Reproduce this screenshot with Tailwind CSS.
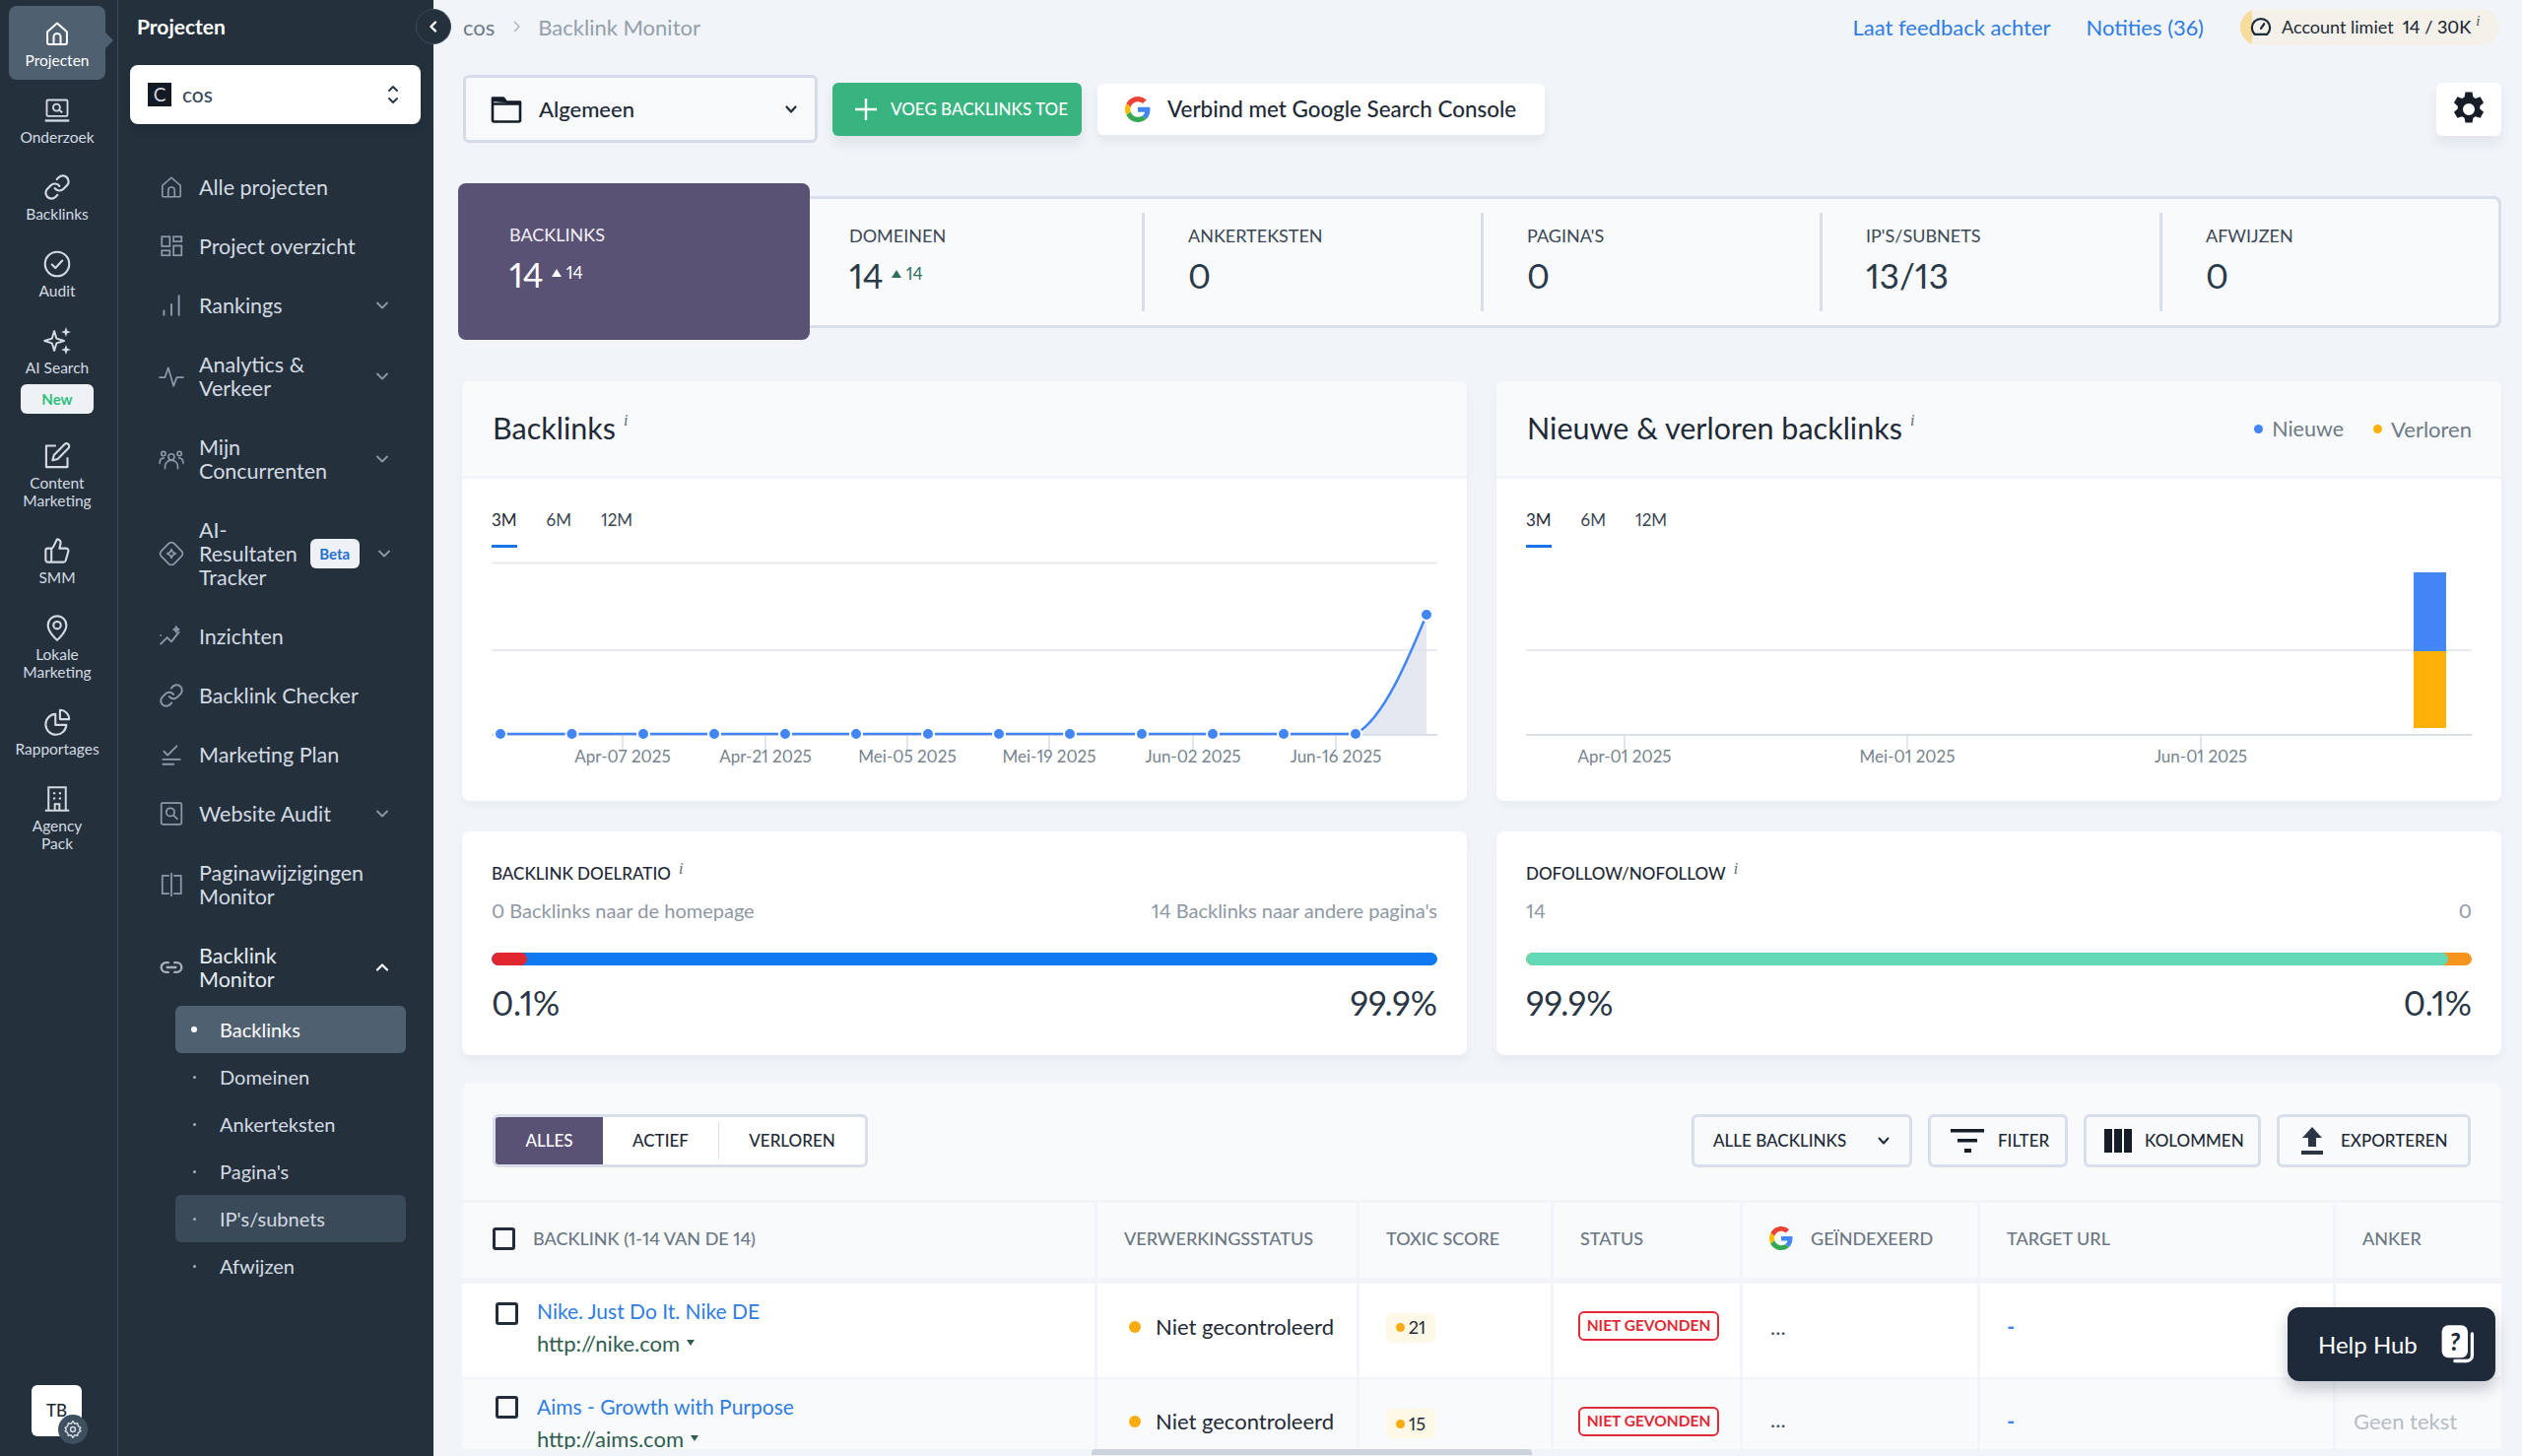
<!DOCTYPE html>
<html lang="nl">
<head>
<meta charset="UTF-8">
<script src="https://cdn.jsdelivr.net/npm/@tailwindcss/browser@4"></script>
<title>Backlink Monitor</title>
</head>
<body class="h-[1478px] w-[2560px] overflow-hidden bg-[#f1f4f8] font-[Lato,sans-serif] text-[#1f2a37] proportional-nums">
<div class="flex h-full">

  <!-- icon rail -->
  <aside class="flex h-full w-[120px] shrink-0 flex-col border-r border-[#3c4a58] bg-[#24313d] pr-[12px] pl-[9px] pt-[6px] text-[15.5px] leading-[18px] text-[#d3dae2]">
    <a class="relative mb-[3px] flex h-[75px] flex-col items-center rounded-lg bg-[#4f6071] pt-[14px] text-white">
      <svg class="h-[28px] w-[28px]" viewBox="0 0 24 24" fill="none" stroke="currentColor" stroke-width="1.7" stroke-linejoin="round"><path d="M3.500 10.500 12 3l8.500 7.500V20a1.500 1.500 0 0 1-1.500 1.500H5A1.500 1.500 0 0 1 3.500 20z"/><path d="M9 21.500V15a3 3 0 0 1 6 0v6.500"/></svg>
      <span class="mt-[4px]">Projecten</span>
      <span class="absolute top-[27px] right-[-8px] h-0 w-0 border-y-[8px] border-l-[8px] border-y-transparent border-l-[#4f6071]"></span>
    </a>
    <a class="mb-[3px] flex h-[75px] flex-col items-center pt-[14px]">
      <svg class="h-[28px] w-[28px]" viewBox="0 0 24 24" fill="none" stroke="currentColor" stroke-width="1.6"><rect x="3" y="3" width="18" height="14" rx="1"/><path d="M1.500 21h21" stroke-width="2"/><circle cx="11.500" cy="9.500" r="3"/><path d="m14 12 2.500 2"/></svg>
      <span class="mt-[4px]">Onderzoek</span>
    </a>
    <a class="mb-[3px] flex h-[75px] flex-col items-center pt-[14px]">
      <svg class="h-[28px] w-[28px]" viewBox="0 0 24 24" fill="none" stroke="currentColor" stroke-width="1.9" stroke-linecap="round"><path d="M10 13a5 5 0 0 0 7.540.540l3-3a5 5 0 0 0-7.070-7.070l-1.720 1.710"/><path d="M14 11a5 5 0 0 0-7.540-.540l-3 3a5 5 0 0 0 7.070 7.070l1.710-1.710"/></svg>
      <span class="mt-[4px]">Backlinks</span>
    </a>
    <a class="mb-[3px] flex h-[75px] flex-col items-center pt-[14px]">
      <svg class="h-[28px] w-[28px]" viewBox="0 0 24 24" fill="none" stroke="currentColor" stroke-width="1.800" stroke-linecap="round" stroke-linejoin="round"><circle cx="12" cy="12" r="10.500"/><path d="m7.500 12.500 3 3 6-6.500"/></svg>
      <span class="mt-[4px]">Audit</span>
    </a>
    <a class="mb-[3px] flex h-[114px] flex-col items-center pt-[14px]">
      <svg class="h-[28px] w-[28px]" viewBox="0 0 24 24" fill="none" stroke="currentColor" stroke-width="1.700" stroke-linejoin="round"><path d="M9.500 3.500 11.500 10l6.500 2-6.500 2-2 6.500-2-6.500L1 12l6.500-2z"/><path d="m19.700 0 1.100 3.200L24 4.300l-3.200 1.100-1.100 3.200-1.100-3.200-3.200-1.100 3.200-1.100zM19.700 15.400l1.100 3.200 3.200 1.100-3.200 1.100-1.100 3.200-1.100-3.200-3.200-1.100 3.200-1.100z" fill="currentColor" stroke="none"/></svg>
      <span class="mt-[4px]">AI Search</span>
      <span class="mt-[8px] flex h-[30px] w-[74px] items-center justify-center rounded-md bg-[#eef2f5] text-[15px] font-bold text-[#2fbf80]">New</span>
    </a>
    <a class="mb-[3px] flex h-[93px] flex-col items-center pt-[14px] text-center">
      <svg class="h-[28px] w-[28px]" viewBox="0 0 24 24" fill="none" stroke="currentColor" stroke-width="1.800" stroke-linejoin="round"><path d="M11 3H2.500v18.500H21V13"/><path d="M18.500 1.800a2.200 2.200 0 0 1 3.300 3.300L12.500 14.500l-4.500 1.200 1.200-4.500z"/></svg>
      <span class="mt-[4px]">Content<br>Marketing</span>
    </a>
    <a class="mb-[3px] flex h-[75px] flex-col items-center pt-[14px]">
      <svg class="h-[28px] w-[28px]" viewBox="0 0 24 24" fill="none" stroke="currentColor" stroke-width="1.800" stroke-linejoin="round"><path d="M7 10v12"/><path d="M15 5.880 14 10h5.830a2 2 0 0 1 1.920 2.560l-2.330 8A2 2 0 0 1 17.500 22H4a2 2 0 0 1-2-2v-8a2 2 0 0 1 2-2h2.760a2 2 0 0 0 1.790-1.110L12 2a3.130 3.130 0 0 1 3 3.880Z"/></svg>
      <span class="mt-[4px]">SMM</span>
    </a>
    <a class="mb-[3px] flex h-[93px] flex-col items-center pt-[14px] text-center">
      <svg class="h-[28px] w-[28px]" viewBox="0 0 24 24" fill="none" stroke="currentColor" stroke-width="1.800"><path d="M20 10c0 6-8 13-8 13s-8-7-8-13a8 8 0 0 1 16 0Z"/><circle cx="12" cy="10" r="3.200"/></svg>
      <span class="mt-[4px]">Lokale<br>Marketing</span>
    </a>
    <a class="mb-[3px] flex h-[75px] flex-col items-center pt-[14px]">
      <svg class="h-[28px] w-[28px]" viewBox="0 0 24 24" fill="none" stroke="currentColor" stroke-width="1.800" stroke-linejoin="round"><path d="M10.500 5A9 9 0 1 0 20 14.500h-9.500z"/><path d="M14.500 1.500a8 8 0 0 1 8 8h-8z"/></svg>
      <span class="mt-[4px]">Rapportages</span>
    </a>
    <a class="flex h-[93px] flex-col items-center pt-[14px] text-center">
      <svg class="h-[28px] w-[28px]" viewBox="0 0 24 24" fill="none" stroke="currentColor" stroke-width="1.700"><path d="M4.500 22V2h15v20M1.500 22h21"/><path d="M8.500 7h2M13.500 7h2M8.500 11.500h2M13.500 11.500h2"/><path d="M10 22v-5.500h4V22"/></svg>
      <span class="mt-[4px]">Agency<br>Pack</span>
    </a>
    <div class="relative mt-auto mb-[20px] ml-[23px] flex h-[52px] w-[51px] items-center justify-center rounded-md bg-white text-[17px] font-medium text-[#1f2a37]">
      TB
      <span class="absolute right-[-6px] bottom-[-8px] flex h-[30px] w-[30px] items-center justify-center rounded-full bg-[#3e4f5f] text-[#d3dae2]">
        <svg class="h-[20px] w-[20px]" viewBox="0 0 24 24" fill="none" stroke="currentColor" stroke-width="1.800" stroke-linejoin="round"><circle cx="12" cy="12" r="3"/><path d="m12 2 2 3 3.500-.5 1 3.500 3 2-1.500 2 1.500 2-3 2-1 3.500-3.500-.5-2 3-2-3-3.500.5-1-3.500-3-2 1.500-2L2.500 10l3-2 1-3.500L10 5z"/></svg>
      </span>
    </div>
  </aside>

  <!-- project sidebar -->
  <aside class="h-full w-[320px] shrink-0 bg-[#24313d] text-[21.5px] leading-[24px] text-[#d3dae2]">
    <div class="flex h-[54px] items-center pl-[19px] text-[21px] font-bold text-white">Projecten</div>
    <div class="mt-[12px] ml-[12px] flex h-[60px] w-[295px] items-center rounded-lg bg-white pl-[18px] shadow-[0_6px_10px_rgba(0,0,0,0.12)]">
      <span class="flex h-[24px] w-[24px] items-center justify-center bg-[#131a24] text-[19px] text-[#d3dae2]">C</span>
      <span class="ml-[11px] text-[21px] font-medium text-[#3b4a5e]">cos</span>
      <svg class="ml-auto mr-[21px] h-[22px] w-[14px]" viewBox="0 0 14 22" fill="none" stroke="#2b3847" stroke-width="2" stroke-linecap="round" stroke-linejoin="round"><path d="m3 7 4-4 4 4M3 15l4 4 4-4"/></svg>
    </div>

    <nav class="mt-[34px] flex flex-col">
      <a class="flex h-[60px] items-center pl-[41px]">
        <svg class="h-[26px] w-[26px] shrink-0 text-[#8d99a6]" viewBox="0 0 24 24" fill="none" stroke="currentColor" stroke-width="1.500" stroke-linejoin="round"><path d="M3.500 10.500 12 3l8.500 7.500V20a1 1 0 0 1-1 1h-15a1 1 0 0 1-1-1z"/><path d="M9 21v-6a3 3 0 0 1 6 0v6"/></svg>
        <span class="ml-[15px]">Alle projecten</span>
      </a>
      <a class="flex h-[60px] items-center pl-[41px]">
        <svg class="h-[26px] w-[26px] shrink-0 text-[#8d99a6]" viewBox="0 0 24 24" fill="none" stroke="currentColor" stroke-width="1.600"><rect x="3" y="3" width="7.500" height="9"/><rect x="14" y="3" width="7.500" height="4.500"/><rect x="3" y="16" width="7.500" height="4.500"/><rect x="14" y="11.500" width="7.500" height="9"/></svg>
        <span class="ml-[15px]">Project overzicht</span>
      </a>
      <a class="flex h-[60px] items-center pl-[41px]">
        <svg class="h-[26px] w-[26px] shrink-0 text-[#8d99a6]" viewBox="0 0 24 24" fill="none" stroke="currentColor" stroke-width="1.800" stroke-linecap="round"><path d="M5 21v-4M12 21V11M19 21V3"/></svg>
        <span class="ml-[15px]">Rankings</span>
        <svg class="ml-auto mr-[45px] h-[14px] w-[14px] text-[#8d99a6]" viewBox="0 0 14 14" fill="none" stroke="currentColor" stroke-width="1.800" stroke-linecap="round" stroke-linejoin="round"><path d="m2 4.500 5 5 5-5"/></svg>
      </a>
      <a class="flex h-[84px] items-center pl-[41px]">
        <svg class="h-[26px] w-[26px] shrink-0 text-[#8d99a6]" viewBox="0 0 24 24" fill="none" stroke="currentColor" stroke-width="1.600" stroke-linecap="round" stroke-linejoin="round"><path d="M1 13h5l3-9 5 17 3-8h6"/></svg>
        <span class="ml-[15px]">Analytics &amp;<br>Verkeer</span>
        <svg class="ml-auto mr-[45px] h-[14px] w-[14px] text-[#8d99a6]" viewBox="0 0 14 14" fill="none" stroke="currentColor" stroke-width="1.800" stroke-linecap="round" stroke-linejoin="round"><path d="m2 4.500 5 5 5-5"/></svg>
      </a>
      <a class="flex h-[84px] items-center pl-[41px]">
        <svg class="h-[26px] w-[26px] shrink-0 text-[#8d99a6]" viewBox="0 0 24 24" fill="none" stroke="currentColor" stroke-width="1.500" stroke-linecap="round"><circle cx="12" cy="10" r="2.800"/><circle cx="4.500" cy="7" r="2"/><circle cx="19.500" cy="7" r="2"/><path d="M6 21v-2a6 6 0 0 1 12 0v2M1 16c0-3 1.500-5 4-5M23 16c0-3-1.500-5-4-5"/></svg>
        <span class="ml-[15px]">Mijn<br>Concurrenten</span>
        <svg class="ml-auto mr-[45px] h-[14px] w-[14px] text-[#8d99a6]" viewBox="0 0 14 14" fill="none" stroke="currentColor" stroke-width="1.800" stroke-linecap="round" stroke-linejoin="round"><path d="m2 4.500 5 5 5-5"/></svg>
      </a>
      <a class="flex h-[108px] items-center pl-[41px]">
        <svg class="h-[26px] w-[26px] shrink-0 text-[#8d99a6]" viewBox="0 0 24 24" fill="none" stroke="currentColor" stroke-width="1.600" stroke-linejoin="round"><path d="M9.500 2.500a3.500 3.500 0 0 1 5 0l7 7a3.500 3.500 0 0 1 0 5l-7 7a3.500 3.500 0 0 1-5 0l-7-7a3.500 3.500 0 0 1 0-5z"/><path d="m12 8 1.300 2.700L16 12l-2.700 1.300L12 16l-1.300-2.700L8 12l2.700-1.300z"/></svg>
        <span class="ml-[15px]">AI-<br>Resultaten<br>Tracker</span>
        <span class="ml-[13px] flex h-[30px] w-[50px] items-center justify-center rounded-md bg-[#eef1f6] text-[15px] font-bold text-[#1f6fcf]">Beta</span>
        <svg class="ml-auto mr-[43px] h-[14px] w-[14px] text-[#8d99a6]" viewBox="0 0 14 14" fill="none" stroke="currentColor" stroke-width="1.800" stroke-linecap="round" stroke-linejoin="round"><path d="m2 4.500 5 5 5-5"/></svg>
      </a>
      <a class="flex h-[60px] items-center pl-[41px]">
        <svg class="h-[26px] w-[26px] shrink-0 text-[#8d99a6]" viewBox="0 0 24 24" fill="none" stroke="currentColor" stroke-width="1.700" stroke-linecap="round" stroke-linejoin="round"><path d="m2 19 6-6 4 4 7-9"/><path d="M2 11v.1M16.500 3l.8 1.700L19 5.500l-1.700.8-.8 1.700-.8-1.700-1.700-.8 1.700-.8z"/></svg>
        <span class="ml-[15px]">Inzichten</span>
      </a>
      <a class="flex h-[60px] items-center pl-[41px]">
        <svg class="h-[26px] w-[26px] shrink-0 text-[#8d99a6]" viewBox="0 0 24 24" fill="none" stroke="currentColor" stroke-width="1.800" stroke-linecap="round"><path d="M10 13a5 5 0 0 0 7.540.540l3-3a5 5 0 0 0-7.070-7.070l-1.720 1.710"/><path d="M14 11a5 5 0 0 0-7.540-.540l-3 3a5 5 0 0 0 7.070 7.070l1.710-1.710"/></svg>
        <span class="ml-[15px]">Backlink Checker</span>
      </a>
      <a class="flex h-[60px] items-center pl-[41px]">
        <svg class="h-[26px] w-[26px] shrink-0 text-[#8d99a6]" viewBox="0 0 24 24" fill="none" stroke="currentColor" stroke-width="1.700" stroke-linecap="round" stroke-linejoin="round"><path d="m5 9 3.500 3.500L17 4"/><path d="M4 16.500h16M4 21h10"/></svg>
        <span class="ml-[15px]">Marketing Plan</span>
      </a>
      <a class="flex h-[60px] items-center pl-[41px]">
        <svg class="h-[26px] w-[26px] shrink-0 text-[#8d99a6]" viewBox="0 0 24 24" fill="none" stroke="currentColor" stroke-width="1.600" stroke-linecap="round"><rect x="2.500" y="2" width="19" height="20" rx="1.500"/><circle cx="11" cy="10.500" r="3.800"/><path d="m14 13.500 3.500 3.500"/></svg>
        <span class="ml-[15px]">Website Audit</span>
        <svg class="ml-auto mr-[45px] h-[14px] w-[14px] text-[#8d99a6]" viewBox="0 0 14 14" fill="none" stroke="currentColor" stroke-width="1.800" stroke-linecap="round" stroke-linejoin="round"><path d="m2 4.500 5 5 5-5"/></svg>
      </a>
      <a class="flex h-[84px] items-center pl-[41px]">
        <svg class="h-[26px] w-[26px] shrink-0 text-[#8d99a6]" viewBox="0 0 24 24" fill="none" stroke="currentColor" stroke-width="1.600" stroke-linejoin="round"><path d="M10 3.500H3.500v17H10M14 3.500h7v17h-7"/><path d="M12 1v22"/></svg>
        <span class="ml-[15px]">Paginawijzigingen<br>Monitor</span>
      </a>
      <a class="flex h-[84px] items-center pl-[41px] text-[#e6ebf0]">
        <svg class="h-[26px] w-[26px] shrink-0 text-[#a6b0bb]" viewBox="0 0 24 24" fill="none" stroke="currentColor" stroke-width="2.200" stroke-linecap="round"><path d="M9 7.500H7a4.500 4.500 0 0 0 0 9h2M15 7.500h2a4.500 4.500 0 0 1 0 9h-2M8 12h8"/></svg>
        <span class="ml-[15px]">Backlink<br>Monitor</span>
        <svg class="ml-auto mr-[45px] h-[14px] w-[14px] text-white" viewBox="0 0 14 14" fill="none" stroke="currentColor" stroke-width="2.200" stroke-linecap="round" stroke-linejoin="round"><path d="m2 9.500 5-5 5 5"/></svg>
      </a>
      <div class="mt-[-3px] flex flex-col text-[20px]">
        <a class="ml-[58px] flex h-[48px] w-[234px] items-center rounded-md bg-[#4f6071] pl-[16px] text-white"><span class="h-[6px] w-[6px] rounded-full bg-white"></span><span class="ml-[23px]">Backlinks</span></a>
        <a class="ml-[58px] flex h-[48px] w-[234px] items-center rounded-md pl-[18px]"><span class="h-[3px] w-[3px] rounded-full bg-[#a6b0bb]"></span><span class="ml-[24px]">Domeinen</span></a>
        <a class="ml-[58px] flex h-[48px] w-[234px] items-center rounded-md pl-[18px]"><span class="h-[3px] w-[3px] rounded-full bg-[#a6b0bb]"></span><span class="ml-[24px]">Ankerteksten</span></a>
        <a class="ml-[58px] flex h-[48px] w-[234px] items-center rounded-md pl-[18px]"><span class="h-[3px] w-[3px] rounded-full bg-[#a6b0bb]"></span><span class="ml-[24px]">Pagina's</span></a>
        <a class="ml-[58px] flex h-[48px] w-[234px] items-center rounded-md bg-[#3a4a58] pl-[18px]"><span class="h-[3px] w-[3px] rounded-full bg-[#a6b0bb]"></span><span class="ml-[24px]">IP's/subnets</span></a>
        <a class="ml-[58px] flex h-[48px] w-[234px] items-center rounded-md pl-[18px]"><span class="h-[3px] w-[3px] rounded-full bg-[#a6b0bb]"></span><span class="ml-[24px]">Afwijzen</span></a>
      </div>
    </nav>
  </aside>

  <!-- main -->
  <main class="relative h-full min-w-0 flex-1">
    <span class="absolute top-[9px] left-[-18px] z-10 flex h-[36px] w-[36px] items-center justify-center rounded-full border border-[#3c4a58] bg-[#24313d] text-white">
      <svg class="h-[14px] w-[14px]" viewBox="0 0 14 14" fill="none" stroke="currentColor" stroke-width="2.400" stroke-linecap="round" stroke-linejoin="round"><path d="M9 2.500 4.500 7 9 11.500"/></svg>
    </span>

    <!-- top bar -->
    <div class="flex h-[54px] items-center pr-[23px] pl-[30px] text-[22px]">
      <span class="text-[#6b7a8a]">cos</span>
      <svg class="mx-[17px] h-[14px] w-[10px] text-[#a7b0ba]" viewBox="0 0 10 14" fill="none" stroke="currentColor" stroke-width="1.300"><path d="m3 2 5 5-5 5"/></svg>
      <span class="text-[#94a0ad]">Backlink Monitor</span>
      <a class="ml-auto text-[#2f7de1]">Laat feedback achter</a>
      <a class="ml-[36px] text-[#2f7de1]">Notities (36)</a>
      <div class="ml-[37px] flex h-[37px] w-[263px] items-center overflow-hidden rounded-full bg-[#f3f1ea] text-[18px] text-[#1f2a37]">
        <span class="h-full w-[12px] bg-[#f8dc9b]"></span>
        <svg class="-ml-[2px] h-[22px] w-[22px]" viewBox="0 0 24 24" fill="none" stroke="currentColor" stroke-width="2.400" stroke-linecap="round"><path d="M5 20.500a10 10 0 1 1 14 0z" stroke-linejoin="round"/><path d="m12 14 3.500-5"/></svg>
        <span class="ml-[10px]">Account limiet</span>
        <span class="ml-[9px] font-medium">14 / 30K</span>
        <i class="ml-[5px] -mt-[12px] font-[Liberation_Serif,serif] text-[15px] text-[#4b5765]">i</i>
      </div>
    </div>

    <!-- toolbar -->
    <div class="mt-[22px] flex items-center pr-[21px] pl-[30px]">
      <div class="flex h-[69px] w-[360px] items-center rounded-md border-[3px] border-[#d5dbe8] bg-[#f7f9fb] pl-[25px]">
        <svg class="h-[30px] w-[32px] text-[#161d27]" viewBox="0 0 32 30" fill="none" stroke="currentColor" stroke-width="2.600" stroke-linejoin="round"><path d="M2 7V26a1.500 1.500 0 0 0 1.500 1.500h25A1.500 1.500 0 0 0 30 26V9.500H2"/><path d="M2 7V3.500h11l3 4h14v2" fill="currentColor"/></svg>
        <span class="ml-[17px] text-[22px] font-medium text-[#1f2a37]">Algemeen</span>
        <svg class="ml-auto mr-[17px] h-[14px] w-[14px] text-[#1f2a37]" viewBox="0 0 14 14" fill="none" stroke="currentColor" stroke-width="2.200" stroke-linecap="round" stroke-linejoin="round"><path d="m2.500 4.500 4.500 5 4.500-5"/></svg>
      </div>
      <button class="ml-[15px] flex h-[54px] w-[253px] items-center rounded-md bg-[#38b480] pl-[22px] text-[17px] font-medium text-white shadow-[0_8px_12px_rgba(60,80,110,0.1)]">
        <svg class="h-[24px] w-[24px]" viewBox="0 0 24 24" fill="none" stroke="currentColor" stroke-width="2.400"><path d="M12 1v22M1 12h22"/></svg>
        <span class="ml-[13px]">VOEG BACKLINKS TOE</span>
      </button>
      <button class="ml-[16px] flex h-[52px] w-[454px] items-center rounded-md bg-white pl-[28px] text-[22.4px] font-medium text-[#1f2a37] shadow-[0_6px_10px_rgba(60,80,110,0.07)]">
        <svg class="h-[26px] w-[26px]" viewBox="0 0 48 48"><path fill="#EA4335" d="M24 9.500c3.540 0 6.710 1.220 9.210 3.600l6.850-6.850C35.900 2.380 30.470 0 24 0 14.620 0 6.510 5.380 2.560 13.220l7.980 6.190C12.430 13.720 17.740 9.500 24 9.500z"/><path fill="#4285F4" d="M46.980 24.550c0-1.570-.15-3.090-.38-4.550H24v9.020h12.940c-.58 2.960-2.260 5.480-4.780 7.180l7.730 6c4.510-4.180 7.090-10.360 7.090-17.650z"/><path fill="#FBBC05" d="M10.530 28.590c-.48-1.450-.76-2.990-.76-4.590s.27-3.140.76-4.590l-7.980-6.190C.92 16.460 0 20.120 0 24c0 3.880.92 7.540 2.560 10.780l7.970-6.190z"/><path fill="#34A853" d="M24 48c6.480 0 11.930-2.130 15.890-5.810l-7.730-6c-2.150 1.450-4.920 2.300-8.160 2.300-6.260 0-11.570-4.220-13.470-9.910l-7.980 6.190C6.510 42.620 14.620 48 24 48z"/></svg>
        <span class="ml-[17px]">Verbind met Google Search Console</span>
      </button>
      <button class="ml-auto flex h-[54px] w-[66px] items-center justify-center rounded-md bg-white shadow-[0_8px_12px_rgba(60,80,110,0.08)]">
        <svg class="h-[38px] w-[38px] text-[#161d27]" viewBox="0 0 24 24" fill="currentColor"><path fill-rule="evenodd" d="M9.800 1h4.400l.6 3.100 1.500.9 3-1 2.200 3.800-2.400 2.100v1.800l2.400 2.100-2.200 3.800-3-1-1.500.9-.6 3.100H9.800l-.6-3.100-1.500-.9-3 1-2.200-3.800 2.400-2.100v-1.800L2.500 7.800 4.700 4l3 1 1.500-.9zM12 8.200a3.800 3.800 0 1 0 0 7.600 3.800 3.800 0 0 0 0-7.600z"/></svg>
      </button>
    </div>

    <!-- stat tabs -->
    <div class="mt-[41px] ml-[25px] flex items-center">
      <div class="flex h-[159px] w-[357px] flex-col rounded-lg bg-[#5a5275] pt-[42px] pl-[52px] text-white">
        <span class="text-[18px] leading-[20px] text-[#f1eff6]">BACKLINKS</span>
        <span class="mt-[9px] flex items-start text-[35px] leading-[42px]">14<span class="mt-[10px] ml-[8px] flex items-center text-[17px] leading-[20px]"><span class="mr-[5px] h-0 w-0 border-x-[5px] border-b-[8px] border-x-transparent border-b-white"></span>14</span></span>
      </div>
      <div class="flex h-[134px] w-[1717px] items-center rounded-r-lg border-[3px] border-l-0 border-[#d8deea] bg-[#f9fafc]">
        <div class="flex h-[100px] w-[337px] flex-col pt-[13px] pl-[40px]">
          <span class="text-[18px] leading-[20px] text-[#3b4754]">DOMEINEN</span>
          <span class="mt-[9px] flex items-start text-[35px] leading-[42px] text-[#2a3a48]">14<span class="mt-[10px] ml-[8px] flex items-center text-[17px] leading-[20px] text-[#2f6f5c]"><span class="mr-[5px] h-0 w-0 border-x-[5px] border-b-[8px] border-x-transparent border-b-[#2f6f5c]"></span>14</span></span>
        </div>
        <div class="flex h-[100px] w-[344px] flex-col border-l-[3px] border-[#d8deea] pt-[13px] pl-[44px]">
          <span class="text-[18px] leading-[20px] text-[#3b4754]">ANKERTEKSTEN</span>
          <span class="mt-[9px] text-[35px] leading-[42px] text-[#2a3a48]">0</span>
        </div>
        <div class="flex h-[100px] w-[344px] flex-col border-l-[3px] border-[#d8deea] pt-[13px] pl-[44px]">
          <span class="text-[18px] leading-[20px] text-[#3b4754]">PAGINA'S</span>
          <span class="mt-[9px] text-[35px] leading-[42px] text-[#2a3a48]">0</span>
        </div>
        <div class="flex h-[100px] w-[345px] flex-col border-l-[3px] border-[#d8deea] pt-[13px] pl-[44px]">
          <span class="text-[18px] leading-[20px] text-[#3b4754]">IP'S/SUBNETS</span>
          <span class="mt-[9px] text-[35px] leading-[42px] text-[#2a3a48]">13/13</span>
        </div>
        <div class="flex h-[100px] w-[300px] flex-col border-l-[3px] border-[#d8deea] pt-[13px] pl-[44px]">
          <span class="text-[18px] leading-[20px] text-[#3b4754]">AFWIJZEN</span>
          <span class="mt-[9px] text-[35px] leading-[42px] text-[#2a3a48]">0</span>
        </div>
      </div>
    </div>

    <!-- charts -->
    <div class="mt-[42px] ml-[29px] grid w-[2070px] grid-cols-[1020px_1020px] gap-x-[30px]">
      <section class="h-[426px] overflow-hidden rounded-lg bg-white shadow-[0_4px_8px_rgba(60,80,110,0.04)]">
        <div class="flex h-[99px] items-center border-b-[3px] border-[#f1f4f8] bg-[#f9fafc] pl-[31px]">
          <h2 class="text-[30.5px] text-[#1f2a37]">Backlinks</h2>
          <i class="mb-[16px] ml-[8px] font-[Liberation_Serif,serif] text-[16px] text-[#5f6b78]">i</i>
        </div>
        <div class="flex gap-[30px] pt-[30px] pl-[30px] text-[17px] leading-[24px] text-[#3b4754]">
          <span class="relative text-[#1f2a37]">3M<span class="absolute right-0 bottom-[-16px] left-0 h-[3px] bg-[#1a73e8]"></span></span>
          <span>6M</span>
          <span>12M</span>
        </div>
        <svg class="mt-[30px] ml-[30px] block" width="960" height="210" viewBox="0 0 960 210" font-family="Lato" font-size="17" fill="#77838f" text-anchor="middle">
          <path d="M0 1.500h960M0 90h960" stroke="#e8ebf0" stroke-width="2"/>
          <path d="M0 176h960" stroke="#d8deea" stroke-width="2"/>
          <path d="M133 176v15M278 176v15M422 176v15M566 176v15M712 176v15M857 176v15" stroke="#d8deea" stroke-width="1.500"/>
          <path d="M880 175 C905 160 930 100 949 55 V176 H880Z" fill="#d8deea" fill-opacity="0.7"/>
          <path d="M9 175H877 C905 160 930 100 949 54" fill="none" stroke="#4285f4" stroke-width="2.500"/>
          <g fill="#4285f4" stroke="#fff" stroke-width="2">
            <circle cx="9" cy="175" r="6"/><circle cx="81.500" cy="175" r="6"/><circle cx="154" cy="175" r="6"/><circle cx="226" cy="175" r="6"/><circle cx="298" cy="175" r="6"/><circle cx="370" cy="175" r="6"/><circle cx="443" cy="175" r="6"/><circle cx="515" cy="175" r="6"/><circle cx="587" cy="175" r="6"/><circle cx="660" cy="175" r="6"/><circle cx="732" cy="175" r="6"/><circle cx="804" cy="175" r="6"/><circle cx="877" cy="175" r="6"/><circle cx="949" cy="54" r="6"/>
          </g>
          <text x="133" y="204">Apr-07 2025</text><text x="278" y="204">Apr-21 2025</text><text x="422" y="204">Mei-05 2025</text><text x="566" y="204">Mei-19 2025</text><text x="712" y="204">Jun-02 2025</text><text x="857" y="204">Jun-16 2025</text>
        </svg>
      </section>

      <section class="h-[426px] overflow-hidden rounded-lg bg-white shadow-[0_4px_8px_rgba(60,80,110,0.04)]">
        <div class="flex h-[99px] items-center border-b-[3px] border-[#f1f4f8] bg-[#f9fafc] pr-[30px] pl-[31px]">
          <h2 class="text-[30.5px] text-[#1f2a37]">Nieuwe &amp; verloren backlinks</h2>
          <i class="mb-[16px] ml-[8px] font-[Liberation_Serif,serif] text-[16px] text-[#5f6b78]">i</i>
          <span class="ml-auto h-[9px] w-[9px] rounded-full bg-[#4285f4]"></span>
          <span class="ml-[9px] text-[21.5px] text-[#6e7a86]">Nieuwe</span>
          <span class="ml-[30px] h-[9px] w-[9px] rounded-full bg-[#ffb10a]"></span>
          <span class="ml-[9px] text-[22px] text-[#6e7a86]">Verloren</span>
        </div>
        <div class="flex gap-[30px] pt-[30px] pl-[30px] text-[17px] leading-[24px] text-[#3b4754]">
          <span class="relative text-[#1f2a37]">3M<span class="absolute right-0 bottom-[-16px] left-0 h-[3px] bg-[#1a73e8]"></span></span>
          <span>6M</span>
          <span>12M</span>
        </div>
        <svg class="mt-[30px] ml-[30px] block" width="960" height="210" viewBox="0 0 960 210" font-family="Lato" font-size="17" fill="#77838f" text-anchor="middle">
          <path d="M0 90h960" stroke="#e8ebf0" stroke-width="2"/>
          <path d="M0 176h960" stroke="#d8deea" stroke-width="2"/>
          <path d="M100 176v15M387 176v15M685 176v15" stroke="#d8deea" stroke-width="1.500"/>
          <rect x="901" y="11" width="33" height="80" fill="#4285f4"/>
          <rect x="901" y="91" width="33" height="78" fill="#ffb10a"/>
          <text x="100" y="204">Apr-01 2025</text><text x="387" y="204">Mei-01 2025</text><text x="685" y="204">Jun-01 2025</text>
        </svg>
      </section>
    </div>

    <!-- ratio cards -->
    <div class="mt-[31px] ml-[29px] grid w-[2070px] grid-cols-[1020px_1020px] gap-x-[30px]">
      <section class="h-[227px] rounded-lg bg-white px-[30px] pt-[31px] shadow-[0_6px_10px_rgba(60,80,110,0.05)]">
        <h3 class="flex h-[24px] items-center text-[17px] font-medium text-[#1f2a37]">BACKLINK DOELRATIO<i class="mb-[10px] ml-[8px] font-[Liberation_Serif,serif] text-[16px] font-normal text-[#5f6b78]">i</i></h3>
        <div class="mt-[13px] flex justify-between text-[20px] leading-[24px] text-[#8e98a4]"><span>0 Backlinks naar de homepage</span><span>14 Backlinks naar andere pagina's</span></div>
        <div class="mt-[31px] flex h-[13px] overflow-hidden rounded-full bg-[#0f7aef]"><span class="w-[36px] rounded-full bg-[#e0272f]"></span></div>
        <div class="mt-[18px] flex justify-between text-[34px] leading-[40px] text-[#2a3645]"><span>0.1%</span><span>99.9%</span></div>
      </section>
      <section class="h-[227px] rounded-lg bg-white px-[30px] pt-[31px] shadow-[0_6px_10px_rgba(60,80,110,0.05)]">
        <h3 class="flex h-[24px] items-center text-[17px] font-medium text-[#1f2a37]">DOFOLLOW/NOFOLLOW<i class="mb-[10px] ml-[8px] font-[Liberation_Serif,serif] text-[16px] font-normal text-[#5f6b78]">i</i></h3>
        <div class="mt-[13px] flex justify-between text-[20px] leading-[24px] text-[#8e98a4]"><span>14</span><span>0</span></div>
        <div class="mt-[31px] flex h-[13px] justify-end overflow-hidden rounded-full bg-[#f7941d]"><span class="mr-[24px] w-full rounded-full bg-[#62d9b4]"></span></div>
        <div class="mt-[18px] flex justify-between text-[34px] leading-[40px] text-[#2a3645]"><span>99.9%</span><span>0.1%</span></div>
      </section>
    </div>

    <!-- table panel -->
    <section class="mt-[29px] ml-[29px] w-[2070px] rounded-t-lg bg-[#f9fafc]">
      <div class="flex h-[118px] items-start pt-[31px] pr-[31px] pl-[31px] text-[17px]">
        <div class="flex h-[54px] w-[381px] items-center overflow-hidden rounded-md border-[3px] border-[#d8deea] bg-white font-medium">
          <span class="flex h-full w-[109px] items-center justify-center bg-[#5a5275] text-white">ALLES</span>
          <span class="flex h-[38px] w-[117px] items-center justify-center">ACTIEF</span>
          <span class="flex h-[38px] flex-1 items-center justify-center border-l border-[#d8deea]">VERLOREN</span>
        </div>
        <div class="ml-auto flex h-[54px] w-[224px] items-center rounded-md border-[3px] border-[#d8deea] bg-[#f9fafc] pl-[19px] font-medium">
          ALLE BACKLINKS
          <svg class="ml-auto mr-[19px] h-[14px] w-[14px]" viewBox="0 0 14 14" fill="none" stroke="currentColor" stroke-width="2" stroke-linecap="round" stroke-linejoin="round"><path d="m2.500 4.500 4.500 5 4.500-5"/></svg>
        </div>
        <div class="ml-[16px] flex h-[54px] w-[142px] items-center rounded-md border-[3px] border-[#d8deea] pl-[20px] font-medium">
          <svg class="h-[24px] w-[34px] shrink-0 text-[#161d27]" viewBox="0 0 34 24" fill="currentColor"><path d="M0 0h34v3.500H0zM7 10h20v3.500H7zM14 20h7v4h-7z"/></svg>
          <span class="ml-[14px]">FILTER</span>
        </div>
        <div class="ml-[16px] flex h-[54px] w-[180px] items-center rounded-md border-[3px] border-[#d8deea] pl-[18px] font-medium">
          <svg class="h-[24px] w-[28px] shrink-0 text-[#161d27]" viewBox="0 0 28 24" fill="currentColor"><path d="M0 0h8v24H0zM10 0h8v24h-8zM20 0h8v24h-8z"/></svg>
          <span class="ml-[13px]">KOLOMMEN</span>
        </div>
        <div class="ml-[16px] flex h-[54px] w-[197px] items-center rounded-md border-[3px] border-[#d8deea] pl-[22px] font-medium">
          <svg class="h-[28px] w-[22px] shrink-0 text-[#2a3645]" viewBox="0 0 22 28" fill="currentColor"><path d="M11 0 21 11h-6v9H7v-9H1zM0 24h22v4H0z"/></svg>
          <span class="ml-[18px]">EXPORTEREN</span>
        </div>
      </div>

      <!-- header -->
      <div class="grid h-[85px] grid-cols-[642px_266px_197px_192px_241px_361px_171px] border-t-[3px] border-b-[6px] border-[#f1f4f8] text-[18px] font-medium text-[#6b7784]">
        <div class="flex items-center pb-[4px] pl-[31px]"><span class="h-[23px] w-[23px] rounded-[3px] border-[3px] border-[#222c3a]"></span><span class="ml-[18px]">BACKLINK (1-14 VAN DE 14)</span></div>
        <div class="flex items-center border-l-[3px] border-[#f1f4f8] pb-[4px] pl-[27px]">VERWERKINGSSTATUS</div>
        <div class="flex items-center border-l-[3px] border-[#f1f4f8] pb-[4px] pl-[27px]">TOXIC SCORE</div>
        <div class="flex items-center border-l-[3px] border-[#f1f4f8] pb-[4px] pl-[27px]">STATUS</div>
        <div class="flex items-center border-l-[3px] border-[#f1f4f8] pb-[4px] pl-[27px]">
          <svg class="h-[24px] w-[24px]" viewBox="0 0 48 48"><path fill="#EA4335" d="M24 9.500c3.540 0 6.710 1.220 9.210 3.600l6.850-6.850C35.900 2.380 30.470 0 24 0 14.620 0 6.510 5.380 2.560 13.220l7.980 6.190C12.430 13.720 17.740 9.500 24 9.500z"/><path fill="#4285F4" d="M46.980 24.550c0-1.570-.15-3.090-.38-4.550H24v9.020h12.940c-.58 2.960-2.260 5.480-4.780 7.180l7.730 6c4.510-4.180 7.090-10.360 7.090-17.650z"/><path fill="#FBBC05" d="M10.530 28.590c-.48-1.450-.76-2.990-.76-4.590s.27-3.140.76-4.590l-7.980-6.190C.92 16.460 0 20.120 0 24c0 3.880.92 7.540 2.560 10.780l7.970-6.190z"/><path fill="#34A853" d="M24 48c6.480 0 11.930-2.130 15.890-5.810l-7.730-6c-2.150 1.450-4.920 2.300-8.160 2.300-6.260 0-11.570-4.220-13.470-9.910l-7.980 6.190C6.510 42.620 14.620 48 24 48z"/></svg>
          <span class="ml-[18px]">GEÏNDEXEERD</span>
        </div>
        <div class="flex items-center border-l-[3px] border-[#f1f4f8] pb-[4px] pl-[27px]">TARGET URL</div>
        <div class="flex items-center border-l-[3px] border-[#f1f4f8] pb-[4px] pl-[27px]">ANKER</div>
      </div>

      <!-- row 1 -->
      <div class="grid h-[97px] grid-cols-[642px_266px_197px_192px_241px_361px_171px] border-b-[2px] border-[#f1f4f8] bg-white text-[22px]">
        <div class="flex items-start pt-[18px] pl-[34px]">
          <span class="mt-[1px] h-[23px] w-[23px] rounded-[3px] border-[3px] border-[#222c3a]"></span>
          <div class="-mt-[7px] ml-[19px] leading-[33px]">
            <a class="block text-[21px] text-[#2f7de1]">Nike. Just Do It. Nike DE</a>
            <span class="flex items-center text-[#2f5d50]">http://nike.com<span class="mt-[-2px] ml-[7px] h-0 w-0 border-x-[4px] border-t-[6px] border-x-transparent border-t-[#2f5d50]"></span></span>
          </div>
        </div>
        <div class="flex items-center border-l-[3px] border-[#f1f4f8] pb-[8px] pl-[32px]"><span class="h-[12px] w-[12px] rounded-full bg-[#fcab11]"></span><span class="ml-[15px]">Niet gecontroleerd</span></div>
        <div class="flex items-center border-l-[3px] border-[#f1f4f8] pb-[6px] pl-[27px]"><span class="flex h-[30px] w-[50px] items-center justify-center rounded-md bg-[#fef9e7] text-[18px]"><span class="mr-[4px] h-[9px] w-[9px] rounded-full bg-[#fcab11]"></span>21</span></div>
        <div class="flex items-center border-l-[3px] border-[#f1f4f8] pb-[9px] pl-[25px]"><span class="flex h-[30px] w-[143px] items-center justify-center rounded-md border-2 border-[#e02b36] text-[15.5px] font-bold text-[#e02b36]">NIET GEVONDEN</span></div>
        <div class="flex items-center border-l-[3px] border-[#f1f4f8] pb-[9px] pl-[28px] text-[#4b5765]">...</div>
        <div class="flex items-center border-l-[3px] border-[#f1f4f8] pb-[8px] pl-[27px] font-bold text-[#4285f4]">-</div>
        <div class="border-l-[3px] border-[#f1f4f8]"></div>
      </div>

      <!-- row 2 -->
      <div class="grid h-[71px] grid-cols-[642px_266px_197px_192px_241px_361px_171px] grid-rows-[71px] overflow-hidden bg-[#f9fafc] text-[22px]">
        <div class="flex items-start pt-[16px] pl-[34px]">
          <span class="mt-[1px] h-[23px] w-[23px] rounded-[3px] border-[3px] border-[#222c3a]"></span>
          <div class="-mt-[5px] ml-[19px] leading-[33px]">
            <a class="block text-[21px] text-[#2f7de1]">Aims - Growth with Purpose</a>
            <span class="flex items-center text-[#2f5d50]">http://aims.com<span class="mt-[-2px] ml-[7px] h-0 w-0 border-x-[4px] border-t-[6px] border-x-transparent border-t-[#2f5d50]"></span></span>
          </div>
        </div>
        <div class="flex items-start border-l-[3px] border-[#f1f4f8] pt-[30px] pl-[32px] leading-[26px]"><span class="mt-[7px] h-[12px] w-[12px] rounded-full bg-[#fcab11]"></span><span class="ml-[15px]">Niet gecontroleerd</span></div>
        <div class="flex items-start border-l-[3px] border-[#f1f4f8] pt-[30px] pl-[27px]"><span class="flex h-[30px] w-[50px] items-center justify-center rounded-md bg-[#fef9e7] text-[18px]"><span class="mr-[4px] h-[9px] w-[9px] rounded-full bg-[#fcab11]"></span>15</span></div>
        <div class="flex items-start border-l-[3px] border-[#f1f4f8] pt-[28px] pl-[25px]"><span class="flex h-[30px] w-[143px] items-center justify-center rounded-md border-2 border-[#e02b36] text-[15.5px] font-bold text-[#e02b36]">NIET GEVONDEN</span></div>
        <div class="flex items-start border-l-[3px] border-[#f1f4f8] pt-[28px] pl-[28px] leading-[26px] text-[#4b5765]">...</div>
        <div class="flex items-start border-l-[3px] border-[#f1f4f8] pt-[30px] pl-[27px] leading-[26px] font-bold text-[#4285f4]">-</div>
        <div class="flex items-start border-l-[3px] border-[#f1f4f8] pt-[30px] pl-[18px] leading-[26px] text-[#b6bdc6]">Geen tekst</div>
      </div>
      <div class="h-[6px] bg-[#f1f4f8] pl-[639px]"><div class="h-full w-[447px] rounded-t bg-[#ccd3de]"></div></div>
    </section>

    <!-- help hub -->
    <button class="absolute top-[1327px] right-[27px] flex h-[75px] w-[211px] items-center rounded-xl bg-[#1e2a3a] pl-[31px] text-[24px] text-white shadow-[0_8px_16px_rgba(30,42,58,0.25)]">
      Help Hub
      <svg class="ml-[18px] h-[44px] w-[44px]" viewBox="0 0 40 40"><path d="M34 10v20a5 5 0 0 1-5 5H18" fill="none" stroke="#fff" stroke-width="3" stroke-linecap="round"/><rect x="6" y="2" width="24" height="30" rx="6" fill="#fff"/><text x="18" y="25" font-family="Lato" font-size="22" font-weight="900" font-style="italic" fill="#1e2a3a" text-anchor="middle">?</text></svg>
    </button>
  </main>
</div>
</body>
</html>
